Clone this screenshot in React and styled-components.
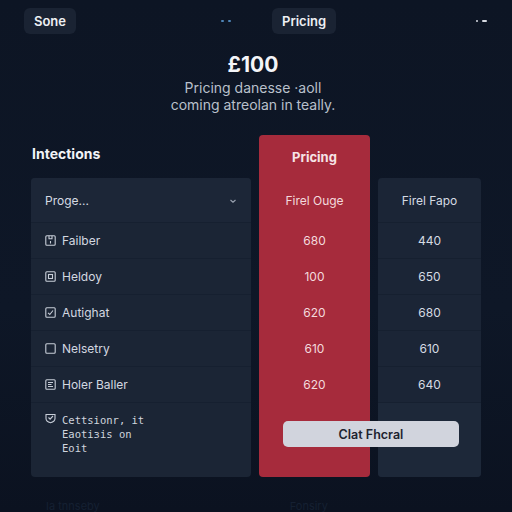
import React from "react";
import styled, { createGlobalStyle } from "styled-components";

const Global = createGlobalStyle`
  html, body { margin: 0; padding: 0; }
  body {
    background: linear-gradient(180deg, #0d1524 0%, #0e1727 60%, #0b1220 100%);
    font-family: Inter, "Noto Sans", "Liberation Sans", sans-serif;
    color: #e6e9ef;
    width: 512px;
    height: 512px;
    overflow: hidden;
  }
`;

const Page = styled.div`
  width: 512px;
  height: 512px;
  display: flex;
  flex-direction: column;
`;

const Nav = styled.nav`
  display: flex;
  align-items: center;
  padding: 8px 24px 0 24px;
  height: 26px;
`;

const NavButton = styled.div`
  height: 26px;
  padding: 0 10px;
  display: flex;
  align-items: center;
  background: #1a2333;
  border-radius: 6px;
  font-size: 13px;
  font-weight: 600;
  color: #eef0f4;
  margin-left: ${(p) => p.$ml || 0}px;
`;

const Dots = styled.div`
  display: flex;
  align-items: center;
  gap: 4px;
  margin-left: ${(p) => p.$ml || 0}px;
`;

const Dot = styled.span`
  display: block;
  width: ${(p) => p.$w || 3}px;
  height: 2px;
  border-radius: 1px;
  background: ${(p) => p.$c};
`;

const Hero = styled.header`
  display: flex;
  flex-direction: column;
  align-items: center;
  padding-right: 6px;
  margin-top: 18px;
`;

const Price = styled.h1`
  margin: 0;
  font-size: 21px;
  font-weight: 700;
  line-height: 26px;
  color: #f4f5f8;
`;

const Sub = styled.p`
  margin: 1px 0 0 0;
  font-size: 14px;
  line-height: 17px;
  color: #b9c0cb;
  text-align: center;
`;

const Table = styled.section`
  position: relative;
  display: grid;
  grid-template-columns: 220px 111px 103px;
  column-gap: 8px;
  align-items: end;
  padding-left: 31px;
  margin-top: 22px;
`;

const LeftCol = styled.div`
  display: flex;
  flex-direction: column;
`;

const SectionTitle = styled.h2`
  margin: 0 0 15px 1px;
  font-size: 14px;
  font-weight: 700;
  line-height: 18px;
  color: #f2f4f7;
`;

const Card = styled.div`
  display: flex;
  flex-direction: column;
  background: ${(p) => p.$bg || "#1b2535"};
  border-radius: 4px;
  overflow: hidden;
`;

const PlanHead = styled.div`
  height: 43px;
  display: flex;
  align-items: center;
  justify-content: center;
  font-size: 13px;
  font-weight: 700;
  color: #f6e3e6;
`;

const Row = styled.div`
  height: ${(p) => p.$h}px;
  display: flex;
  align-items: ${(p) => (p.$top ? "flex-start" : "center")};
  justify-content: ${(p) => (p.$center ? "center" : "flex-start")};
  padding: ${(p) => (p.$center ? "0" : p.$top ? "10px 14px 0 14px" : "0 14px")};
  box-sizing: border-box;
  gap: 6px;
  font-size: 12px;
  color: ${(p) => p.$color || "#d3d8e0"};
  background: ${(p) => p.$bg || "transparent"};
  border-top: 1px solid ${(p) => (p.$first ? "transparent" : p.$line || "#162030")};
`;

const HeadLabel = styled.span`
  flex: 1;
  font-size: 12px;
  color: #d5dae2;
`;

const Mono = styled.div`
  font-family: "DejaVu Sans Mono", "Liberation Mono", monospace;
  font-size: 10.5px;
  line-height: 14px;
  color: #d0d5de;
`;

const CTA = styled.button`
  position: absolute;
  left: 283px;
  top: 286px;
  width: 176px;
  height: 26px;
  border: none;
  border-radius: 5px;
  background: #d1d4dd;
  color: #1d2330;
  font-family: Inter, "Liberation Sans", sans-serif;
  font-size: 12.5px;
  font-weight: 600;
  cursor: pointer;
`;

const Ghost = styled.div`
  display: flex;
  gap: 190px;
  padding: 22px 0 0 46px;
  font-size: 11px;
  color: #152032;
`;

const Icon = ({ kind }) => {
  const s = { stroke: "#c8ced8", strokeWidth: 1.1, fill: "none" };
  return (
    <svg width="11" height="11" viewBox="0 0 11 11">
      {kind === "shield" ? (
        <path d="M1 1.5h9v4c0 2.2-2 3.6-4.5 4.3C3 9.1 1 7.7 1 5.5z" {...s} />
      ) : (
        <rect x="0.8" y="0.8" width="9.4" height="9.4" rx="1" {...s} />
      )}
      {kind === "bar" && <path d="M4 0.8v3h3v-3M5.5 6v2.5" {...s} />}
      {kind === "box" && <rect x="3.5" y="3.5" width="4" height="4" {...s} />}
      {kind === "check" && <path d="M3 5.8l1.8 1.7L8 3.5" {...s} />}
      {kind === "lines" && <path d="M3 3.5h5M3 5.5h3.5M3 7.5h5" {...s} />}
      {kind === "shield" && <path d="M3.5 4.5l1.6 1.6L8 3" {...s} />}
    </svg>
  );
};

const Chevron = () => (
  <svg width="8" height="6" viewBox="0 0 8 6">
    <path d="M1.5 2l2.5 2.2L6.5 2" stroke="#9aa3b1" strokeWidth="1.1" fill="none" />
  </svg>
);

const features = [
  { icon: "bar", label: "Failber", a: "680", b: "440" },
  { icon: "box", label: "Heldoy", a: "100", b: "650" },
  { icon: "check", label: "Autighat", a: "620", b: "680" },
  { icon: "empty", label: "Nelsetry", a: "610", b: "610" },
  { icon: "lines", label: "Holer Baller", a: "620", b: "640" },
];

export default function App() {
  return (
    <Page>
      <Global />
      <Nav>
        <NavButton>Sone</NavButton>
        <Dots $ml={145}>
          <Dot $c="#4f86b8" />
          <Dot $c="#4f86b8" />
        </Dots>
        <NavButton $ml={41}>Pricing</NavButton>
        <Dots $ml={140}>
          <Dot $c="#d7dbe2" $w={2} />
          <Dot $c="#d7dbe2" $w={5} />
        </Dots>
      </Nav>

      <Hero>
        <Price>£100</Price>
        <Sub>
          Pricing danesse ·aoll
          <br />
          coming atreolan in teally.
        </Sub>
      </Hero>

      <Table>
        <LeftCol>
          <SectionTitle>Intections</SectionTitle>
          <Card $bg="#1b2535">
            <Row $h={44} $first $bg="#1c2637">
              <HeadLabel>Proge...</HeadLabel>
              <Chevron />
            </Row>
            {features.map((f) => (
              <Row key={f.label} $h={36}>
                <Icon kind={f.icon} />
                {f.label}
              </Row>
            ))}
            <Row $h={75} $top>
              <Icon kind="shield" />
              <Mono>
                Cettsionr, it
                <br />
                Eaotiзis on
                <br />
                Eoit
              </Mono>
            </Row>
          </Card>
        </LeftCol>

        <Card $bg="#a62b3c">
          <PlanHead>Pricing</PlanHead>
          <Row $h={44} $center $first $color="#f3dadd">
            Firel Ouge
          </Row>
          {features.map((f) => (
            <Row key={f.label} $h={36} $center $line="transparent" $color="#f3dadd">
              {f.a}
            </Row>
          ))}
          <Row $h={75} $center $line="transparent" />
        </Card>

        <Card $bg="#1b2536">
          <Row $h={44} $center $first $color="#d6dbe3">
            Firel Fapo
          </Row>
          {features.map((f) => (
            <Row key={f.label} $h={36} $center $color="#d6dbe3">
              {f.b}
            </Row>
          ))}
          <Row $h={75} $center $bg="#1d2839" />
        </Card>

        <CTA>Clat Fhcral</CTA>
      </Table>

      <Ghost>
        <span>Ia tnnseby</span>
        <span>Fonsiry</span>
      </Ghost>
    </Page>
  );
}
